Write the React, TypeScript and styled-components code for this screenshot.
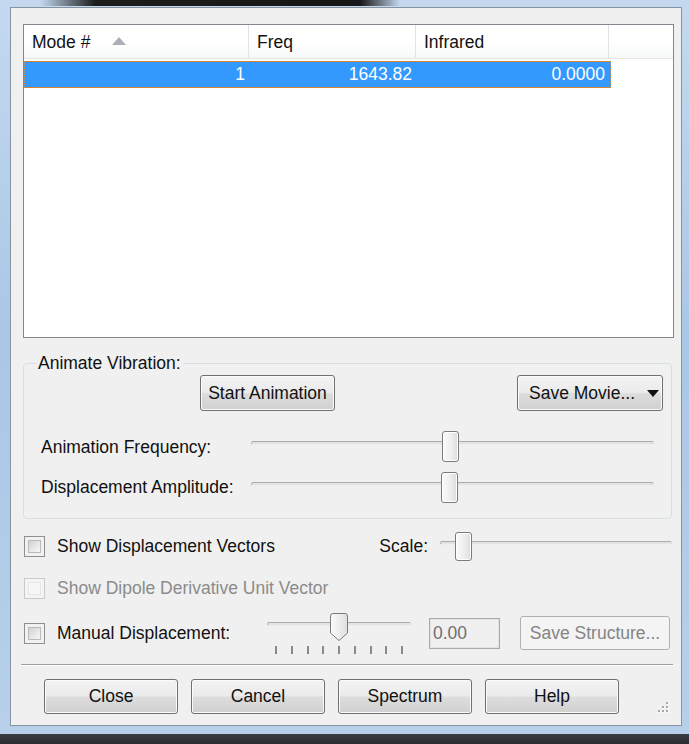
import React from 'react';
import styled, { createGlobalStyle } from 'styled-components';

const GlobalStyle = createGlobalStyle`
	html, body {
		margin: 0;
		padding: 0;
		background: #b9d2ec;
	}
	body {
		font-family: 'Liberation Sans', Arial, sans-serif;
		font-size: 17.5px;
		color: #111;
	}
	* {
		box-sizing: border-box;
	}
`;

interface SliderProps {
	width: number;
	height: number;
	value: number;
	trackTop: number;
	thumbTop: number;
	thumbHeight: number;
	pointer?: boolean;
	ticks?: number;
}

const Slider: React.FunctionComponent<SliderProps> = ({
	width,
	height,
	value,
	trackTop,
	thumbTop,
	thumbHeight,
	pointer,
	ticks,
}) => (
	<SliderBox $w={width} $h={height}>
		<Track $top={trackTop} />
		{pointer ? (
			<PointerThumb style={{ left: `calc(${value}% - 9px)` }} $top={thumbTop}>
				<svg width="18" height={thumbHeight} viewBox={`0 0 18 ${thumbHeight}`}>
					<defs>
						<linearGradient id="ptr" x1="0" x2="1" y1="0" y2="0">
							<stop offset="0" stopColor="#fbfbfb" />
							<stop offset="1" stopColor="#dedede" />
						</linearGradient>
					</defs>
					<path
						d={`M3 0.5 H15 Q17.5 0.5 17.5 3 V${thumbHeight - 8} L9 ${thumbHeight - 0.5} L0.5 ${
							thumbHeight - 8
						} V3 Q0.5 0.5 3 0.5 Z`}
						fill="url(#ptr)"
						stroke="#7b7b7b"
					/>
				</svg>
			</PointerThumb>
		) : (
			<Thumb style={{ left: `calc(${value}% - 8px)` }} $top={thumbTop} $h={thumbHeight} />
		)}
		{ticks ? (
			<Ticks>
				{Array.from({ length: ticks }).map((_, i) => (
					<Tick key={i} />
				))}
			</Ticks>
		) : null}
	</SliderBox>
);

const Checkbox: React.FunctionComponent<{ disabled?: boolean }> = ({ disabled }) => (
	<CheckFrame $disabled={disabled}>
		<CheckFill $disabled={disabled} />
	</CheckFrame>
);

const SizeGrip: React.FunctionComponent = () => (
	<Grip width="13" height="13" viewBox="0 0 13 13">
		{[
			[10, 2],
			[6, 6],
			[10, 6],
			[2, 10],
			[6, 10],
			[10, 10],
		].map(([x, y]) => (
			<g key={`${x}-${y}`}>
				<rect x={x + 1} y={y + 1} width="2" height="2" fill="#ffffff" />
				<rect x={x} y={y} width="2" height="2" fill="#a8a8a8" />
			</g>
		))}
	</Grip>
);

const App: React.FunctionComponent = () => {
	return (
		<Desktop>
			<GlobalStyle />
			<Window>
				<ListView>
					<ListHeader>
						<HeaderCell $w={225}>
							Mode #
							<SortArrow />
						</HeaderCell>
						<HeaderCell $w={167}>Freq</HeaderCell>
						<HeaderCell $w={193}>Infrared</HeaderCell>
						<HeaderFiller />
					</ListHeader>
					<SelectedRow>
						<Cell $w={224}>1</Cell>
						<Cell $w={167}>1643.82</Cell>
						<Cell $w={193}>0.0000</Cell>
					</SelectedRow>
				</ListView>

				<Group>
					<GroupTitle>Animate Vibration:</GroupTitle>
					<GroupButtons>
						<StartButton $w={135}>Start Animation</StartButton>
						<MenuButton $w={146}>
							Save Movie...
							<Caret />
						</MenuButton>
					</GroupButtons>
					<SliderRow>
						<SliderLabel>Animation Frequency:</SliderLabel>
						<Slider width={403} height={40} value={49.3} trackTop={14} thumbTop={4} thumbHeight={31} />
					</SliderRow>
					<SliderRow>
						<SliderLabel>Displacement Amplitude:</SliderLabel>
						<Slider width={403} height={40} value={49.2} trackTop={15} thumbTop={5} thumbHeight={31} />
					</SliderRow>
				</Group>

				<CheckRow $h={34} $gap={10}>
					<Checkbox />
					<CheckText>Show Displacement Vectors</CheckText>
					<ScaleGroup>
						<ScaleLabel>Scale:</ScaleLabel>
						<Slider width={232} height={34} value={10.1} trackTop={12} thumbTop={3} thumbHeight={29} />
					</ScaleGroup>
				</CheckRow>

				<CheckRow $h={34} $gap={8}>
					<Checkbox disabled />
					<CheckText $disabled>Show Dipole Derivative Unit Vector</CheckText>
				</CheckRow>

				<CheckRow $h={44} $gap={6}>
					<Checkbox />
					<CheckText $w={210}>Manual Displacement:</CheckText>
					<Slider
						width={144}
						height={41}
						value={50}
						trackTop={9}
						thumbTop={0}
						thumbHeight={28}
						pointer
						ticks={9}
					/>
					<ValueBox>0.00</ValueBox>
					<SaveButton $w={150} $h={34} disabled>
						Save Structure...
					</SaveButton>
				</CheckRow>

				<Separator />

				<ButtonBar>
					<Button $w={134} $h={35}>
						Close
					</Button>
					<Button $w={134} $h={35}>
						Cancel
					</Button>
					<Button $w={134} $h={35}>
						Spectrum
					</Button>
					<Button $w={134} $h={35}>
						Help
					</Button>
					<SizeGrip />
				</ButtonBar>
			</Window>
		</Desktop>
	);
};

/* ************** Frame ************** */
const Desktop = styled.div`
	width: 689px;
	height: 744px;
	overflow: hidden;
	padding: 7px 0 0 10px;
	background: linear-gradient(90deg, rgba(20, 20, 20, 0) 0, #1d1d1d 55px, #161616 320px, rgba(20, 20, 20, 0) 360px)
			40px 0 / 360px 6px no-repeat,
		linear-gradient(180deg, #3a3d42, #2b2d30) 0 734px / 100% 10px no-repeat,
		linear-gradient(180deg, #c4d9ef 0, #aac7e6 45%, #b8d0ea 100%);
`;

const Window = styled.div`
	display: flex;
	flex-direction: column;
	width: 672px;
	height: 719px;
	padding: 16px 7px 0 12px;
	border: 1px solid #8693a1;
	background: #f0f0f0;
`;

/* ************** List ************** */
const ListView = styled.div`
	display: flex;
	flex-direction: column;
	height: 314px;
	border: 1px solid #828790;
	background: #fff;
`;

const ListHeader = styled.div`
	display: flex;
	height: 34px;
	border-bottom: 1px solid #e5e5e5;
	background: linear-gradient(180deg, #ffffff 0, #ffffff 55%, #f6f7f8 100%);
`;

const HeaderCell = styled.div<{ $w: number }>`
	display: flex;
	align-items: center;
	width: ${p => p.$w}px;
	padding: 2px 0 0 8px;
	border-right: 1px solid #e2e3e5;
`;

const HeaderFiller = styled.div`
	flex: 1;
`;

const SortArrow = styled.span`
	width: 0;
	height: 0;
	margin: -4px 0 0 22px;
	border-left: 7.5px solid transparent;
	border-right: 7.5px solid transparent;
	border-bottom: 8px solid #a9b0b8;
`;

const SelectedRow = styled.div`
	display: flex;
	width: 587px;
	height: 27px;
	margin-top: 2px;
	border: 1px dotted #e0913d;
	background: #3399ff;
	color: #fff;
`;

const Cell = styled.div<{ $w: number }>`
	width: ${p => p.$w}px;
	padding-right: 4px;
	line-height: 25px;
	text-align: right;
`;

/* ************** Animate group ************** */
const Group = styled.fieldset`
	min-width: 0;
	margin: 15px 2px 0 0;
	padding: 2px 8px 11px 17px;
	border: 1px solid #d5dfe5;
	border-radius: 4px;
`;

const GroupTitle = styled.legend`
	margin-left: -5px;
	padding: 0 2px;
	line-height: 20px;
`;

const GroupButtons = styled.div`
	display: flex;
	align-items: center;
`;

const Button = styled.button<{ $w: number; $h?: number }>`
	display: flex;
	align-items: center;
	justify-content: center;
	width: ${p => p.$w}px;
	height: ${p => p.$h ?? 36}px;
	padding: 0;
	border: 1px solid #707070;
	border-radius: 3px;
	background: linear-gradient(180deg, #f3f3f3 0%, #ebebeb 48%, #dddddd 52%, #d0d0d0 100%);
	box-shadow: inset 0 0 0 1px #fbfbfb;
	font: inherit;
	color: #111;
	&:disabled {
		border-color: #adb2b5;
		background: #f4f4f4;
		box-shadow: none;
		color: #848484;
	}
`;

const StartButton = styled(Button)`
	margin-left: 159px;
`;

const MenuButton = styled(Button)`
	justify-content: space-between;
	margin-left: auto;
	padding: 0 3px 0 11px;
`;

const Caret = styled.span`
	width: 0;
	height: 0;
	border-left: 6px solid transparent;
	border-right: 6px solid transparent;
	border-top: 7px solid #111;
`;

const SliderRow = styled.div`
	display: flex;
	align-items: center;
	height: 40px;
	${GroupButtons} + & {
		margin-top: 16px;
	}
`;

const SliderLabel = styled.span`
	width: 210px;
`;

/* ************** Slider ************** */
const SliderBox = styled.div<{ $w: number; $h: number }>`
	position: relative;
	flex: none;
	width: ${p => p.$w}px;
	height: ${p => p.$h}px;
`;

const Track = styled.div<{ $top: number }>`
	position: absolute;
	top: ${p => p.$top}px;
	left: 0;
	right: 0;
	height: 4px;
	border: 1px solid;
	border-color: #acacac #dadada #eeeeee #b4b4b4;
	border-radius: 2px;
	background: #e3e3e3;
`;

const Thumb = styled.div<{ $top: number; $h: number }>`
	position: absolute;
	top: ${p => p.$top}px;
	width: 17px;
	height: ${p => p.$h}px;
	border: 1px solid #7b7b7b;
	border-radius: 3px;
	background: linear-gradient(90deg, #fbfbfb 0, #ececec 60%, #dcdcdc 100%);
	box-shadow: inset 0 0 0 1px #ffffff;
`;

const PointerThumb = styled.div<{ $top: number }>`
	position: absolute;
	top: ${p => p.$top}px;
	line-height: 0;
`;

const Ticks = styled.div`
	position: absolute;
	top: 33px;
	left: 8px;
	right: 8px;
	display: flex;
	justify-content: space-between;
`;

const Tick = styled.span`
	width: 2px;
	height: 8px;
	background: #8a8a8a;
`;

/* ************** Options ************** */
const CheckRow = styled.div<{ $h: number; $gap: number }>`
	display: flex;
	align-items: center;
	height: ${p => p.$h}px;
	margin-top: ${p => p.$gap}px;
`;

const CheckFrame = styled.span<{ $disabled?: boolean }>`
	display: flex;
	flex: none;
	width: 21px;
	height: 21px;
	margin-left: 1px;
	padding: 3px;
	border: 1px solid ${p => (p.$disabled ? '#c9c9c9' : '#8e8f8f')};
	background: ${p => (p.$disabled ? '#f4f4f4' : '#f1f1f1')};
`;

const CheckFill = styled.span<{ $disabled?: boolean }>`
	flex: 1;
	border: 1px solid ${p => (p.$disabled ? '#e6e6e6' : '#b9bbbe')};
	background: ${p =>
		p.$disabled ? '#f7f7f7' : 'linear-gradient(135deg, #cfd1d4 0%, #e6e7e8 55%, #f6f6f6 100%)'};
`;

const CheckText = styled.span<{ $disabled?: boolean; $w?: number }>`
	${p => (p.$w ? `width: ${p.$w}px;` : '')}
	margin-left: 12px;
	color: ${p => (p.$disabled ? '#8b8b8b' : '#111')};
`;

const ScaleGroup = styled.div`
	display: flex;
	align-items: center;
	margin: 0 2px 0 auto;
`;

const ScaleLabel = styled.span`
	margin-right: 12px;
`;

const ValueBox = styled.div`
	display: flex;
	align-items: center;
	width: 71px;
	height: 31px;
	margin-left: 18px;
	padding-left: 3px;
	border: 1px solid #a9a9a9;
	box-shadow: inset 0 0 0 1px #e2e2e2;
	background: #f0f0f0;
	color: #6f6f6f;
`;

const SaveButton = styled(Button)`
	margin-left: 20px;
`;

const Separator = styled.div`
	height: 2px;
	margin: 9px 1px 0 -2px;
	border-top: 1px solid #a0a0a0;
	border-bottom: 1px solid #ffffff;
`;

/* ************** Footer buttons ************** */
const ButtonBar = styled.div`
	display: flex;
	gap: 13px;
	margin-top: 13px;
	padding: 0 5px 0 21px;
`;

const Grip = styled.svg`
	align-self: flex-end;
	margin: 0 0 1px auto;
`;

export default App;
